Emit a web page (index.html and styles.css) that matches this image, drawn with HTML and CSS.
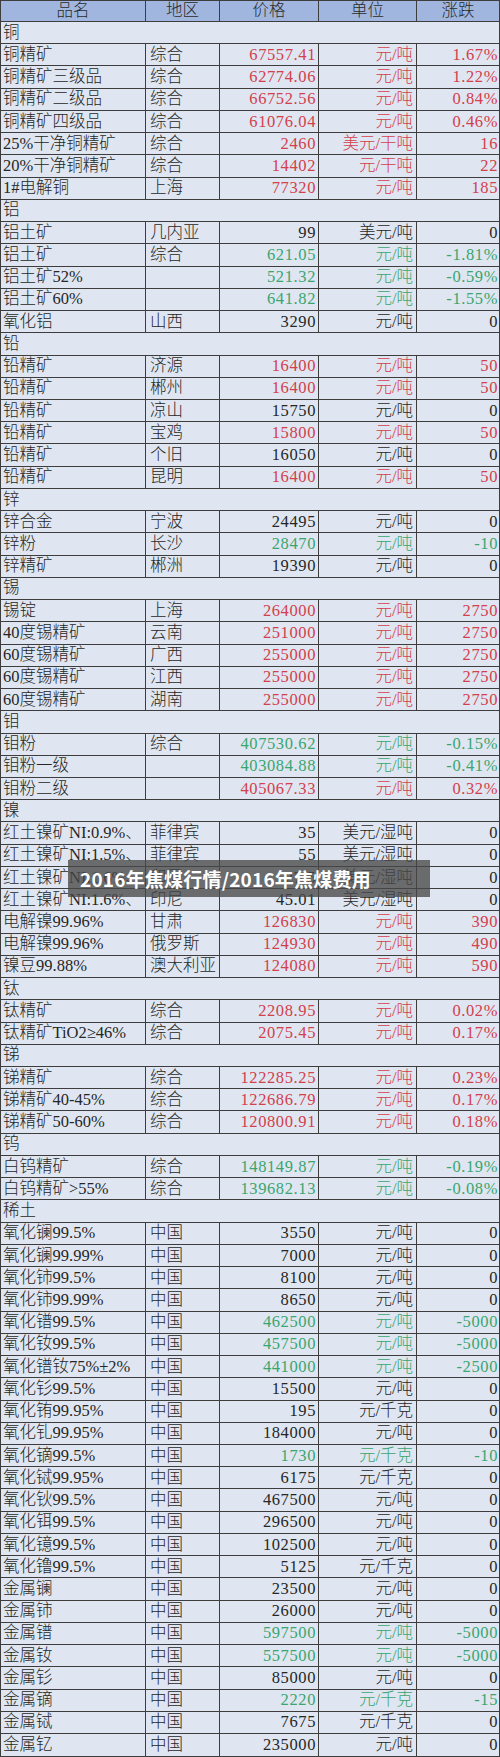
FILE: index.html
```html
<!DOCTYPE html>
<html lang="zh">
<head>
<meta charset="utf-8">
<link rel="stylesheet" href="styles.css">
</head>
<body>
<div class="sheet">
<table class="prices">
<colgroup><col class="c-name"><col class="c-area"><col class="c-price"><col class="c-unit"><col class="c-chg"></colgroup>
<thead>
<tr class="head"><th>品名</th><th>地区</th><th>价格</th><th>单位</th><th>涨跌</th></tr>
</thead>
<tbody>
<tr class="sec"><td colspan="5">铜</td></tr>
<tr class="up"><td>铜精矿</td><td>综合</td><td>67557.41</td><td>元/吨</td><td>1.67%</td></tr>
<tr class="up"><td>铜精矿三级品</td><td>综合</td><td>62774.06</td><td>元/吨</td><td>1.22%</td></tr>
<tr class="up"><td>铜精矿二级品</td><td>综合</td><td>66752.56</td><td>元/吨</td><td>0.84%</td></tr>
<tr class="up"><td>铜精矿四级品</td><td>综合</td><td>61076.04</td><td>元/吨</td><td>0.46%</td></tr>
<tr class="up"><td>25%干净铜精矿</td><td>综合</td><td>2460</td><td>美元/干吨</td><td>16</td></tr>
<tr class="up"><td>20%干净铜精矿</td><td>综合</td><td>14402</td><td>元/干吨</td><td>22</td></tr>
<tr class="up"><td>1#电解铜</td><td>上海</td><td>77320</td><td>元/吨</td><td>185</td></tr>
<tr class="sec"><td colspan="5">铝</td></tr>
<tr><td>铝土矿</td><td>几内亚</td><td>99</td><td>美元/吨</td><td>0</td></tr>
<tr class="dn"><td>铝土矿</td><td>综合</td><td>621.05</td><td>元/吨</td><td>-1.81%</td></tr>
<tr class="dn"><td>铝土矿52%</td><td></td><td>521.32</td><td>元/吨</td><td>-0.59%</td></tr>
<tr class="dn"><td>铝土矿60%</td><td></td><td>641.82</td><td>元/吨</td><td>-1.55%</td></tr>
<tr><td>氧化铝</td><td>山西</td><td>3290</td><td>元/吨</td><td>0</td></tr>
<tr class="sec"><td colspan="5">铅</td></tr>
<tr class="up"><td>铅精矿</td><td>济源</td><td>16400</td><td>元/吨</td><td>50</td></tr>
<tr class="up"><td>铅精矿</td><td>郴州</td><td>16400</td><td>元/吨</td><td>50</td></tr>
<tr><td>铅精矿</td><td>凉山</td><td>15750</td><td>元/吨</td><td>0</td></tr>
<tr class="up"><td>铅精矿</td><td>宝鸡</td><td>15800</td><td>元/吨</td><td>50</td></tr>
<tr><td>铅精矿</td><td>个旧</td><td>16050</td><td>元/吨</td><td>0</td></tr>
<tr class="up"><td>铅精矿</td><td>昆明</td><td>16400</td><td>元/吨</td><td>50</td></tr>
<tr class="sec"><td colspan="5">锌</td></tr>
<tr><td>锌合金</td><td>宁波</td><td>24495</td><td>元/吨</td><td>0</td></tr>
<tr class="dn"><td>锌粉</td><td>长沙</td><td>28470</td><td>元/吨</td><td>-10</td></tr>
<tr><td>锌精矿</td><td>郴洲</td><td>19390</td><td>元/吨</td><td>0</td></tr>
<tr class="sec"><td colspan="5">锡</td></tr>
<tr class="up"><td>锡锭</td><td>上海</td><td>264000</td><td>元/吨</td><td>2750</td></tr>
<tr class="up"><td>40度锡精矿</td><td>云南</td><td>251000</td><td>元/吨</td><td>2750</td></tr>
<tr class="up"><td>60度锡精矿</td><td>广西</td><td>255000</td><td>元/吨</td><td>2750</td></tr>
<tr class="up"><td>60度锡精矿</td><td>江西</td><td>255000</td><td>元/吨</td><td>2750</td></tr>
<tr class="up"><td>60度锡精矿</td><td>湖南</td><td>255000</td><td>元/吨</td><td>2750</td></tr>
<tr class="sec"><td colspan="5">钼</td></tr>
<tr class="dn"><td>钼粉</td><td>综合</td><td>407530.62</td><td>元/吨</td><td>-0.15%</td></tr>
<tr class="dn"><td>钼粉一级</td><td></td><td>403084.88</td><td>元/吨</td><td>-0.41%</td></tr>
<tr class="up"><td>钼粉二级</td><td></td><td>405067.33</td><td>元/吨</td><td>0.32%</td></tr>
<tr class="sec"><td colspan="5">镍</td></tr>
<tr><td>红土镍矿NI:0.9%、</td><td>菲律宾</td><td>35</td><td>美元/湿吨</td><td>0</td></tr>
<tr><td>红土镍矿NI:1.5%、</td><td>菲律宾</td><td>55</td><td>美元/湿吨</td><td>0</td></tr>
<tr><td>红土镍矿NI:1.6%、</td><td>印尼</td><td>27.5</td><td>美元/湿吨</td><td>0</td></tr>
<tr><td>红土镍矿NI:1.6%、</td><td>印尼</td><td>45.01</td><td>美元/湿吨</td><td>0</td></tr>
<tr class="up"><td>电解镍99.96%</td><td>甘肃</td><td>126830</td><td>元/吨</td><td>390</td></tr>
<tr class="up"><td>电解镍99.96%</td><td>俄罗斯</td><td>124930</td><td>元/吨</td><td>490</td></tr>
<tr class="up"><td>镍豆99.88%</td><td>澳大利亚</td><td>124080</td><td>元/吨</td><td>590</td></tr>
<tr class="sec"><td colspan="5">钛</td></tr>
<tr class="up"><td>钛精矿</td><td>综合</td><td>2208.95</td><td>元/吨</td><td>0.02%</td></tr>
<tr class="up"><td>钛精矿TiO2≥46%</td><td>综合</td><td>2075.45</td><td>元/吨</td><td>0.17%</td></tr>
<tr class="sec"><td colspan="5">锑</td></tr>
<tr class="up"><td>锑精矿</td><td>综合</td><td>122285.25</td><td>元/吨</td><td>0.23%</td></tr>
<tr class="up"><td>锑精矿40-45%</td><td>综合</td><td>122686.79</td><td>元/吨</td><td>0.17%</td></tr>
<tr class="up"><td>锑精矿50-60%</td><td>综合</td><td>120800.91</td><td>元/吨</td><td>0.18%</td></tr>
<tr class="sec"><td colspan="5">钨</td></tr>
<tr class="dn"><td>白钨精矿</td><td>综合</td><td>148149.87</td><td>元/吨</td><td>-0.19%</td></tr>
<tr class="dn"><td>白钨精矿&gt;55%</td><td>综合</td><td>139682.13</td><td>元/吨</td><td>-0.08%</td></tr>
<tr class="sec"><td colspan="5">稀土</td></tr>
<tr><td>氧化镧99.5%</td><td>中国</td><td>3550</td><td>元/吨</td><td>0</td></tr>
<tr><td>氧化镧99.99%</td><td>中国</td><td>7000</td><td>元/吨</td><td>0</td></tr>
<tr><td>氧化铈99.5%</td><td>中国</td><td>8100</td><td>元/吨</td><td>0</td></tr>
<tr><td>氧化铈99.99%</td><td>中国</td><td>8650</td><td>元/吨</td><td>0</td></tr>
<tr class="dn"><td>氧化镨99.5%</td><td>中国</td><td>462500</td><td>元/吨</td><td>-5000</td></tr>
<tr class="dn"><td>氧化钕99.5%</td><td>中国</td><td>457500</td><td>元/吨</td><td>-5000</td></tr>
<tr class="dn"><td>氧化镨钕75%±2%</td><td>中国</td><td>441000</td><td>元/吨</td><td>-2500</td></tr>
<tr><td>氧化钐99.5%</td><td>中国</td><td>15500</td><td>元/吨</td><td>0</td></tr>
<tr><td>氧化铕99.95%</td><td>中国</td><td>195</td><td>元/千克</td><td>0</td></tr>
<tr><td>氧化钆99.95%</td><td>中国</td><td>184000</td><td>元/吨</td><td>0</td></tr>
<tr class="dn"><td>氧化镝99.5%</td><td>中国</td><td>1730</td><td>元/千克</td><td>-10</td></tr>
<tr><td>氧化铽99.95%</td><td>中国</td><td>6175</td><td>元/千克</td><td>0</td></tr>
<tr><td>氧化钬99.5%</td><td>中国</td><td>467500</td><td>元/吨</td><td>0</td></tr>
<tr><td>氧化铒99.5%</td><td>中国</td><td>296500</td><td>元/吨</td><td>0</td></tr>
<tr><td>氧化镱99.5%</td><td>中国</td><td>102500</td><td>元/吨</td><td>0</td></tr>
<tr><td>氧化镥99.5%</td><td>中国</td><td>5125</td><td>元/千克</td><td>0</td></tr>
<tr><td>金属镧</td><td>中国</td><td>23500</td><td>元/吨</td><td>0</td></tr>
<tr><td>金属铈</td><td>中国</td><td>26000</td><td>元/吨</td><td>0</td></tr>
<tr class="dn"><td>金属镨</td><td>中国</td><td>597500</td><td>元/吨</td><td>-5000</td></tr>
<tr class="dn"><td>金属钕</td><td>中国</td><td>557500</td><td>元/吨</td><td>-5000</td></tr>
<tr><td>金属钐</td><td>中国</td><td>85000</td><td>元/吨</td><td>0</td></tr>
<tr class="dn"><td>金属镝</td><td>中国</td><td>2220</td><td>元/千克</td><td>-15</td></tr>
<tr><td>金属铽</td><td>中国</td><td>7675</td><td>元/千克</td><td>0</td></tr>
<tr><td>金属钇</td><td>中国</td><td>235000</td><td>元/吨</td><td>0</td></tr>
</tbody>
</table>
<div class="watermark">2016年焦煤行情/2016年焦煤费用</div>
</div>
</body>
</html>
```
FILE: styles.css
```css
html, body {
  margin: 0;
  padding: 0;
  background: #ffffff;
}
.sheet {
  position: relative;
  width: 500px;
  height: 1757px;
  overflow: hidden;
}
.prices {
  width: 499px;
  height: 1757px;
  border-collapse: collapse;
  table-layout: fixed;
  background: #dfe6f1;
  font-family: "Liberation Serif", "Noto Sans CJK SC", serif;
  font-size: 16.5px;
  font-weight: 300;
  color: #262626;
}
.c-name { width: 145px; }
.c-area { width: 74px; }
.c-price { width: 99px; }
.c-unit { width: 98px; }
.c-chg { width: 83px; }
.prices th,
.prices td {
  border: 1px solid #3d3d3d;
  padding: 0 3px;
  line-height: 20px;
  white-space: nowrap;
  overflow: hidden;
}
.prices th {
  background: #a0b6df;
  font-weight: 300;
  text-align: center;
  color: #2a2a2a;
}
.prices td:nth-child(1) { padding-left: 2px; }
.prices td:nth-child(2) { padding-left: 4px; }
.prices td:nth-child(3),
.prices td:nth-child(4),
.prices td:nth-child(5) {
  text-align: right;
  letter-spacing: 0.6px;
}
.prices td:nth-child(3) { padding-right: 2px; }
.prices td:nth-child(4) { letter-spacing: 0; padding-right: 3px; }
.prices td:nth-child(5) { padding-right: 1px; }
.sec td {
  text-align: left !important;
}
.up td:nth-child(n+3) { color: #d2404c; }
.dn td:nth-child(n+3) { color: #3aa56f; }
.watermark {
  position: absolute;
  left: 68px;
  top: 860px;
  width: 362px;
  height: 37px;
  box-sizing: border-box;
  padding-left: 12px;
  background: rgba(72, 72, 72, 0.78);
  color: #ffffff;
  font-family: "Noto Sans CJK SC", "Noto Sans", sans-serif;
  font-weight: 700;
  font-size: 19px;
  line-height: 37px;
  letter-spacing: 0.2px;
  white-space: nowrap;
}
```
